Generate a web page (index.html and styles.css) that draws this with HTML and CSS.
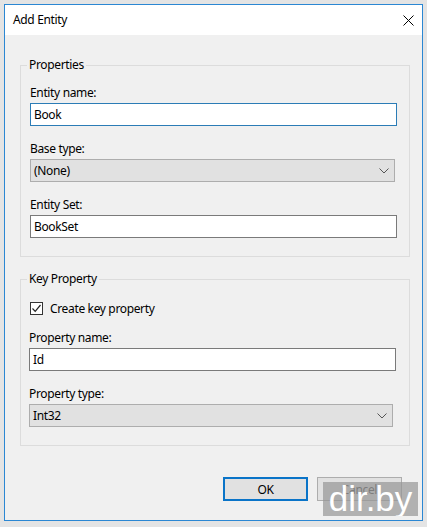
FILE: index.html
```html
<!DOCTYPE html>
<html>
<head>
<meta charset="utf-8">
<title>Add Entity</title>
<link rel="stylesheet" href="styles.css">
</head>
<body>
<div class="screen">
  <div class="window">
    <div class="titlebar">
      <span class="title">Add Entity</span>
      <svg class="close" width="11" height="11" viewBox="0 0 11 11"><path d="M0.5 0.5 L10.5 10.5 M10.5 0.5 L0.5 10.5" stroke="#000" stroke-width="1" fill="none"/></svg>
    </div>
    <div class="content">
      <fieldset class="group group-props">
        <legend>Properties</legend>
        <div class="field">
          <div class="label">Entity name:</div>
          <div class="textbox focused w367">Book</div>
        </div>
        <div class="field">
          <div class="label">Base type:</div>
          <div class="combo w365"><span>(None)</span><svg class="chev" width="10" height="6" viewBox="0 0 10 6"><path d="M0.5 0.5 L5 5 L9.5 0.5" stroke="#555" stroke-width="1" fill="none"/></svg></div>
        </div>
        <div class="field">
          <div class="label">Entity Set:</div>
          <div class="textbox w367">BookSet</div>
        </div>
      </fieldset>
      <fieldset class="group group-key">
        <legend>Key Property</legend>
        <div class="checkrow">
          <span class="checkbox"><svg width="11" height="11" viewBox="0 0 11 11"><path d="M1.5 5.5 L4.2 8.3 L9.5 2" stroke="#222" stroke-width="1.2" fill="none"/></svg></span>
          <span>Create key property</span>
        </div>
        <div class="field">
          <div class="label">Property name:</div>
          <div class="textbox w367">Id</div>
        </div>
        <div class="field">
          <div class="label">Property type:</div>
          <div class="combo w364"><span>Int32</span><svg class="chev" width="10" height="6" viewBox="0 0 10 6"><path d="M0.5 0.5 L5 5 L9.5 0.5" stroke="#555" stroke-width="1" fill="none"/></svg></div>
        </div>
      </fieldset>
      <div class="buttons">
        <div class="btn default">OK</div>
        <div class="btn">Cancel</div>
      </div>
    </div>
  </div>
  <div class="watermark">dir.by</div>
</div>
</body>
</html>
```

FILE: styles.css
```css
html, body {
  margin: 0;
  padding: 0;
}
body {
  background: #e4e4e4;
  font-family: "Noto Sans", "Open Sans", sans-serif;
  font-size: 12px;
  letter-spacing: -0.35px;
  color: #000;
}
.screen {
  position: relative;
  width: 427px;
  height: 527px;
  padding: 4px 0 0 4px;
  box-sizing: border-box;
}
.window {
  width: 417px;
  height: 515px;
  border: 1px solid #2b87d3;
  background: #f0f0f0;
  display: flex;
  flex-direction: column;
}
.titlebar {
  height: 30px;
  background: #fff;
  display: flex;
  align-items: center;
  justify-content: space-between;
  padding: 0 8px 0 8px;
  flex-shrink: 0;
}
.title {
  line-height: 16px;
}
.close {
  display: block;
}
.content {
  padding: 22px 12px 0 15px;
}
.group {
  margin: 0;
  border: 1px solid #dcdcdc;
  padding: 12px 12px 18px 9px;
  min-width: 0;
}
.group legend {
  padding: 0 2px;
  margin-left: -3px;
  line-height: 16px;
}
.group-key {
  margin-top: 14px;
  padding: 14px 12px 18px 8px;
}
.group-key legend {
  margin-left: -2px;
}
.field + .field {
  margin-top: 15px;
}
.checkrow + .field {
  margin-top: 14px;
}
.label {
  line-height: 15px;
  margin-bottom: 3px;
}
.textbox {
  height: 23px;
  box-sizing: border-box;
  border: 1px solid #7a7a7a;
  background: #fff;
  padding: 0 3px;
  line-height: 21px;
}
.textbox.focused {
  border-color: #2b7cb6;
}
.combo {
  height: 23px;
  box-sizing: border-box;
  border: 1px solid #adadad;
  background: #e1e1e1;
  padding: 0 4px 0 3px;
  line-height: 21px;
  display: flex;
  align-items: center;
  justify-content: space-between;
}
.chev {
  display: block;
  margin-right: 1px;
}
.w367 { width: 367px; }
.w365 { width: 365px; }
.w364 { width: 364px; }
.checkrow {
  display: flex;
  align-items: center;
  gap: 7px;
  line-height: 15px;
  padding-left: 1px;
}
.checkbox {
  width: 13px;
  height: 13px;
  box-sizing: border-box;
  border: 1px solid #333;
  background: #fff;
  display: flex;
  align-items: center;
  justify-content: center;
}
.checkbox svg {
  display: block;
}
.buttons {
  margin-top: 31px;
  display: flex;
  justify-content: flex-end;
  gap: 9px;
  padding-right: 8px;
}
.btn {
  width: 85px;
  height: 24px;
  box-sizing: border-box;
  border: 1px solid #adadad;
  background: #e1e1e1;
  display: flex;
  align-items: center;
  justify-content: center;
  color: #444;
}
.btn.default {
  border: 2px solid #0a74c8;
  color: #000;
}
.watermark {
  position: absolute;
  left: 323px;
  top: 482px;
  width: 95px;
  height: 34px;
  background: rgba(150, 150, 150, 0.7);
  color: #fff;
  font-family: "Liberation Sans", Arial, sans-serif;
  font-size: 35px;
  letter-spacing: 0;
  line-height: 34px;
  text-align: center;
  overflow: hidden;
}
```
